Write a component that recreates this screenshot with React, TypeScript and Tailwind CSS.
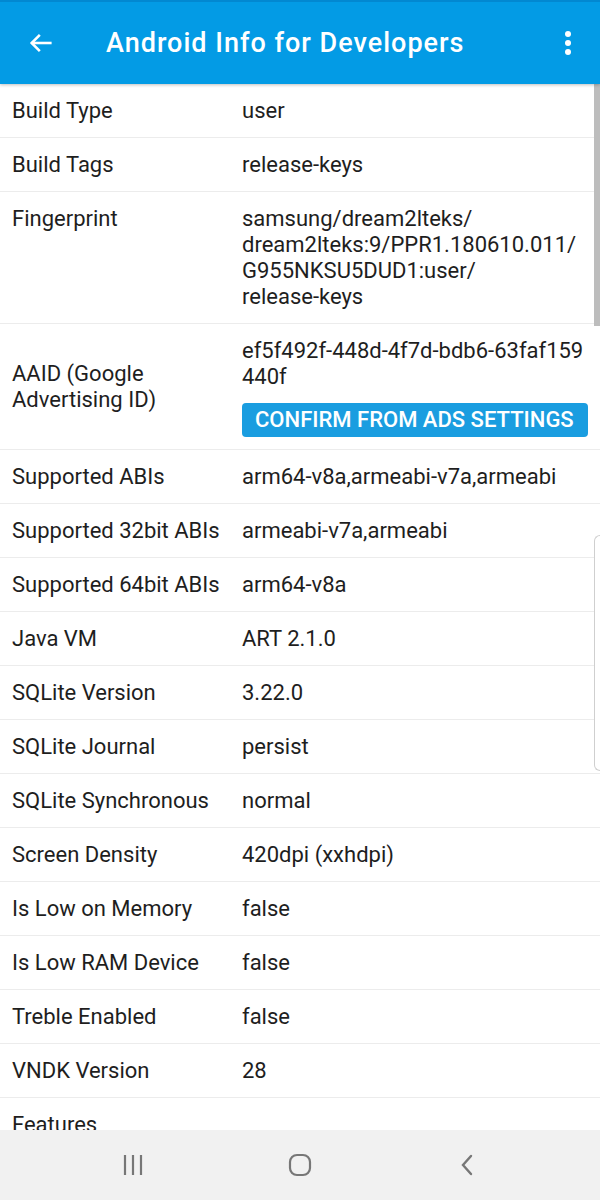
import React from "react";

type Row = { label: string[]; value: string[]; button?: boolean; top?: boolean };

const rows: Row[] = [
  { label: ["Build Type"], value: ["user"] },
  { label: ["Build Tags"], value: ["release-keys"] },
  {
    label: ["Fingerprint"],
    value: [
      "samsung/dream2lteks/",
      "dream2lteks:9/PPR1.180610.011/",
      "G955NKSU5DUD1:user/",
      "release-keys",
    ],
    top: true,
  },
  {
    label: ["AAID (Google", "Advertising ID)"],
    value: ["ef5f492f-448d-4f7d-bdb6-63faf159", "440f"],
    button: true,
  },
  { label: ["Supported ABIs"], value: ["arm64-v8a,armeabi-v7a,armeabi"] },
  { label: ["Supported 32bit ABIs"], value: ["armeabi-v7a,armeabi"] },
  { label: ["Supported 64bit ABIs"], value: ["arm64-v8a"] },
  { label: ["Java VM"], value: ["ART 2.1.0"] },
  { label: ["SQLite Version"], value: ["3.22.0"] },
  { label: ["SQLite Journal"], value: ["persist"] },
  { label: ["SQLite Synchronous"], value: ["normal"] },
  { label: ["Screen Density"], value: ["420dpi (xxhdpi)"] },
  { label: ["Is Low on Memory"], value: ["false"] },
  { label: ["Is Low RAM Device"], value: ["false"] },
  { label: ["Treble Enabled"], value: ["false"] },
  { label: ["VNDK Version"], value: ["28"] },
  { label: ["Features"], value: [""] },
];

export default function App() {
  return (
    <div
      className="relative flex h-[1200px] w-[600px] flex-col overflow-hidden bg-white text-[#1e1e1e]"
      style={{ fontFamily: "Roboto, 'Noto Sans', sans-serif" }}
    >
      {/* App bar */}
      <div className="relative z-10 flex h-[84px] shrink-0 items-center border-t-2 border-[#0288d1] bg-[#039be5] shadow-[0_1px_3px_rgba(0,0,0,0.25)]">
        <div className="flex w-[106px] justify-start pl-[27px]">
          <svg width="28" height="28" viewBox="0 0 24 24" fill="none" stroke="white" strokeWidth="2.2" strokeLinecap="square">
            <path d="M20 12H5" />
            <path d="M11 5l-7 7 7 7" strokeLinecap="butt" strokeLinejoin="miter" />
          </svg>
        </div>
        <span className="flex-1 text-[27px] font-medium tracking-[1px] text-white">
          Android Info for Developers
        </span>
        <div className="flex w-[64px] justify-center">
          <svg width="8" height="26" viewBox="0 0 8 26" fill="white">
            <circle cx="4" cy="4" r="3" />
            <circle cx="4" cy="13" r="3" />
            <circle cx="4" cy="22" r="3" />
          </svg>
        </div>
      </div>

      {/* List */}
      <div className="relative flex-1 overflow-hidden">
        {rows.map((row, i) => (
          <div
            key={i}
            className="flex border-b border-[#ececec] px-3 pt-[14px] pb-[13px] text-[22px] leading-[26px]"
          >
            <div
              className={`flex w-[230px] shrink-0 flex-col ${row.top ? "justify-start" : "justify-center"}`}
            >
              {row.label.map((l) => (
                <span key={l}>{l}</span>
              ))}
            </div>
            <div className="flex flex-1 flex-col">
              {row.value.map((v, j) => (
                <span key={j} className="whitespace-nowrap">
                  {v}
                </span>
              ))}
              {row.button && (
                <button className="mt-[13px] mb-[-1px] flex h-[34px] w-[346px] items-center rounded-[4px] bg-[#1a9de0] pl-[13px] text-[22px] font-medium text-white">
                  CONFIRM FROM ADS SETTINGS
                </button>
              )}
            </div>
          </div>
        ))}

        {/* scrollbar */}
        <div className="absolute right-0 top-0 h-[242px] w-[6px] bg-[#bdbdbd]" />
        {/* edge panel handle */}
        <div className="absolute right-0 top-[451px] h-[236px] w-[6px] rounded-l-[6px] border border-r-0 border-[#cfcfcf] bg-white" />
      </div>

      {/* Nav bar */}
      <div className="flex h-[70px] shrink-0 items-center justify-center bg-[#f1f1f1]">
        <div className="flex w-[167px] justify-center">
          <svg width="22" height="22" viewBox="0 0 22 22" stroke="#777" strokeWidth="2.2">
            <path d="M3 1v20M11 1v20M19 1v20" />
          </svg>
        </div>
        <div className="flex w-[167px] justify-center">
          <svg width="24" height="24" viewBox="0 0 24 24" fill="none" stroke="#777" strokeWidth="2.2">
            <rect x="2" y="2" width="20" height="20" rx="7" />
          </svg>
        </div>
        <div className="flex w-[167px] justify-center">
          <svg width="16" height="24" viewBox="0 0 16 24" fill="none" stroke="#777" strokeWidth="2.4" strokeLinecap="round">
            <path d="M12 3L4 12l8 9" />
          </svg>
        </div>
      </div>
    </div>
  );
}
